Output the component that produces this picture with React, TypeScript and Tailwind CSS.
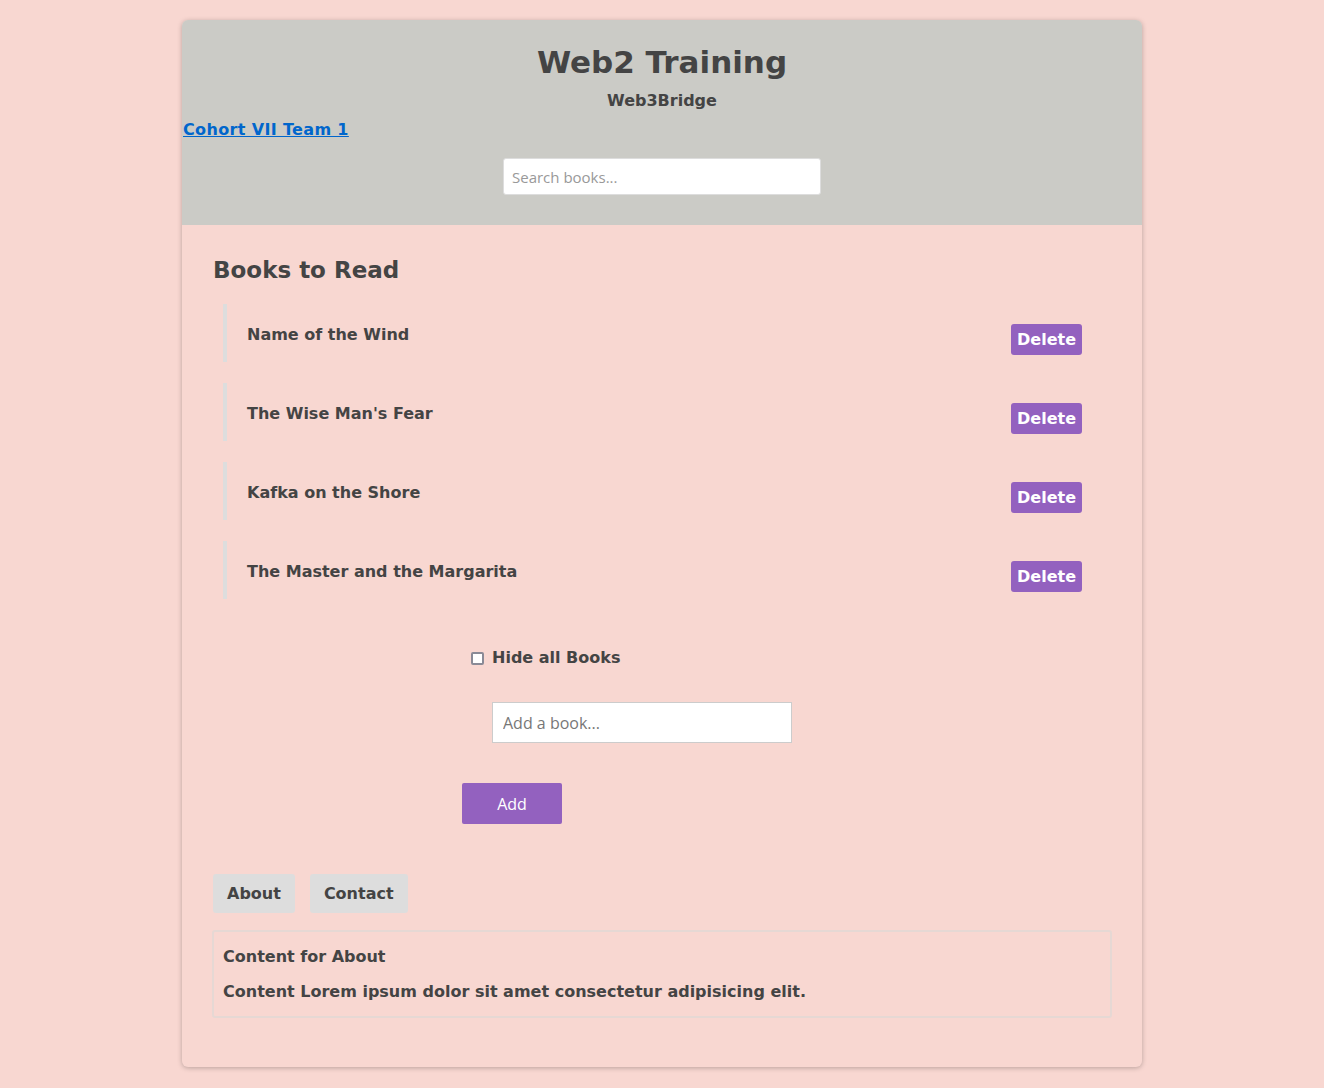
import React, { useState } from 'react';

const books = ['Name of the Wind', "The Wise Man's Fear", 'Kafka on the Shore', 'The Master and the Margarita'];

export default function App() {
  const [tab, setTab] = useState<'about' | 'contact'>('about');

  return (
    <div className="min-h-screen bg-[#f8d7d1] py-5 font-['DejaVu_Sans',sans-serif] text-[#444]">
      <div className="mx-auto w-[960px] rounded-md bg-[#f8d7d1] shadow-[0_1px_5px_rgba(0,0,0,0.25)] overflow-hidden">
        <header className="bg-[#cbcbc6] pt-[22px] pb-[30px]">
          <h1 className="text-center text-[31px] font-bold leading-[40px]">Web2 Training</h1>
          <p className="mt-[9px] text-center text-[16px] font-bold leading-[20px]">Web3Bridge</p>
          <a href="#" className="mt-[9px] ml-px block w-fit text-[16px] font-bold leading-[20px] tracking-[0.35px] text-[#0066cc] underline">
            Cohort VII Team 1
          </a>
          <div className="mt-[18px] flex justify-center">
            <input
              placeholder="Search books..."
              className="h-[37px] w-[318px] rounded-[3px] border border-[#ddd] bg-white px-2 font-['Open_Sans',sans-serif] text-[15px] placeholder:text-[#999] outline-none"
            />
          </div>
        </header>

        <main className="px-[30px] pt-[30px] pb-[49px]">
          <h2 className="ml-px text-[23px] font-bold leading-[30px]">Books to Read</h2>
          <ul className="mt-[19px] flex flex-col gap-[21px] pl-[11px] pr-[30px]">
            {books.map((b) => (
              <li key={b} className="flex h-[58px] items-start justify-between border-l-4 border-[#ddd] pl-5">
                <span className="mt-[21px] text-[16px] font-bold leading-[20px]">{b}</span>
                <button className="mt-[20px] rounded-[3px] bg-[#9361bf] px-[6px] text-[16px] font-bold leading-[31px] text-white">
                  Delete
                </button>
              </li>
            ))}
          </ul>

          <label className="mt-[49px] ml-[259px] flex items-center gap-[8px] text-[16px] font-bold leading-[20px]">
            <input
              type="checkbox"
              className="h-[13px] w-[13px] appearance-none rounded-[2px] border-2 border-[#8a8a96] bg-white checked:bg-[#9361bf]"
            />
            Hide all Books
          </label>

          <div className="mt-[34px] ml-[280px]">
            <input
              placeholder="Add a book..."
              className="h-[41px] w-[300px] border border-[#ccc] bg-white px-[10px] font-['Open_Sans',sans-serif] text-[16px] placeholder:text-[#777] outline-none"
            />
          </div>

          <button className="mt-[40px] ml-[250px] h-[41px] w-[100px] rounded-[2px] bg-[#9361bf] font-['Open_Sans',sans-serif] text-[16px] text-white">
            Add
          </button>

          <div className="mt-[50px] ml-px flex gap-[15px]">
            <button
              onClick={() => setTab('about')}
              className="h-[39px] rounded-[3px] bg-[#ddd] px-[14px] text-[16px] font-bold"
            >
              About
            </button>
            <button
              onClick={() => setTab('contact')}
              className="h-[39px] rounded-[3px] bg-[#ddd] px-[14px] text-[16px] font-bold"
            >
              Contact
            </button>
          </div>

          <div className="mt-[17px] rounded-[3px] border-2 border-[#e6d8d4] px-[9px] pt-[15px] pb-[14px] text-[16px] font-bold leading-[20px]">
            <p>{tab === 'about' ? 'Content for About' : 'Content for Contact'}</p>
            <p className="mt-[15px]">Content Lorem ipsum dolor sit amet consectetur adipisicing elit.</p>
          </div>
        </main>
      </div>
    </div>
  );
}
